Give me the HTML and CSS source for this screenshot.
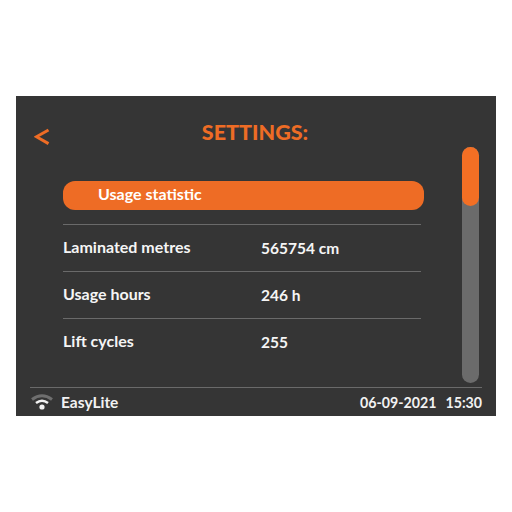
FILE: index.html
```html
<!DOCTYPE html>
<html lang="en">
<head>
    <meta charset="UTF-8">
    <title>Settings | EasyLite</title>
    <link rel="stylesheet" href="styles.css">
</head>
<body>
    <div class="screen">
        <div class="header">
            <svg class="back" width="16" height="18" viewBox="0 0 16 18">
                <path d="M14.5 2 L2.5 8.8 L14.5 15.6" fill="none" stroke="#ee6c25" stroke-width="3"/>
            </svg>
            <div class="title">SETTINGS:</div>
        </div>

        <div class="content">
            <div class="section-pill">Usage statistic</div>
            <div class="row">
                <div class="row-label">Laminated metres</div>
                <div class="row-value">565754 cm</div>
            </div>
            <div class="row">
                <div class="row-label">Usage hours</div>
                <div class="row-value">246 h</div>
            </div>
            <div class="row">
                <div class="row-label">Lift cycles</div>
                <div class="row-value">255</div>
            </div>
        </div>

        <div class="scrollbar">
            <div class="scroll-thumb"></div>
        </div>

        <div class="footer">
            <svg class="wifi" width="24" height="18" viewBox="0 0 24 18">
                <path d="M2 6.5 Q12 -1 22 6.5" fill="none" stroke="#6f6f6f" stroke-width="3"/>
                <path d="M6 10 Q12 5.5 18 10" fill="none" stroke="#f2f2f2" stroke-width="2.6"/>
                <circle cx="12" cy="14" r="2.6" fill="#f2f2f2"/>
            </svg>
            <div class="device">EasyLite</div>
            <div class="date">06-09-2021</div>
            <div class="time">15:30</div>
        </div>
    </div>
</body>
</html>
```

FILE: styles.css
```css
body {
    margin: 0;
    padding: 96px 16px;
    background: white;
    font-family: 'Lato', 'Liberation Sans', sans-serif;
}

.screen {
    position: relative;
    width: 480px;
    height: 320px;
    background: #353535;
    display: flex;
    flex-direction: column;
}

.header {
    position: relative;
    height: 85px;
    flex: none;
}

.back {
    position: absolute;
    left: 18px;
    top: 32px;
}

.title {
    padding-top: 23px;
    padding-right: 2px;
    text-align: center;
    font-size: 21.5px;
    line-height: 26px;
    font-weight: 900;
    color: #ee6c25;
}

.content {
    flex: 1;
    margin-left: 47px;
    width: 361px;
}

.section-pill {
    height: 29px;
    line-height: 26px;
    padding-left: 35px;
    background: #ee6c25;
    border-radius: 12px;
    color: white;
    font-size: 16px;
    font-weight: 700;
    margin-bottom: 14px;
}

.row {
    width: 358px;
    height: 43px;
    padding-bottom: 3px;
    border-top: 1px solid #6a6a6a;
    display: flex;
    align-items: center;
    color: #f5f5f5;
    font-size: 16px;
    font-weight: 700;
}

.row-label {
    width: 198px;
}

.row-value {
    padding-top: 2px;
    font-size: 15.5px;
}

.scrollbar {
    position: absolute;
    left: 446px;
    top: 51px;
    width: 17px;
    height: 236px;
    background: #6b6b6b;
    border-radius: 9px;
}

.scroll-thumb {
    height: 59px;
    background: #f36f24;
    border-radius: 9px;
}

.footer {
    flex: none;
    height: 28px;
    margin: 0 14px;
    border-top: 1px solid #6a6a6a;
    display: flex;
    align-items: center;
    color: #f2f2f2;
    font-size: 14.2px;
    font-weight: 700;
}

.wifi {
    margin-right: 7px;
}

.device {
    flex: 1;
    font-size: 15.5px;
}

.date {
    margin-right: 9px;
}
```
